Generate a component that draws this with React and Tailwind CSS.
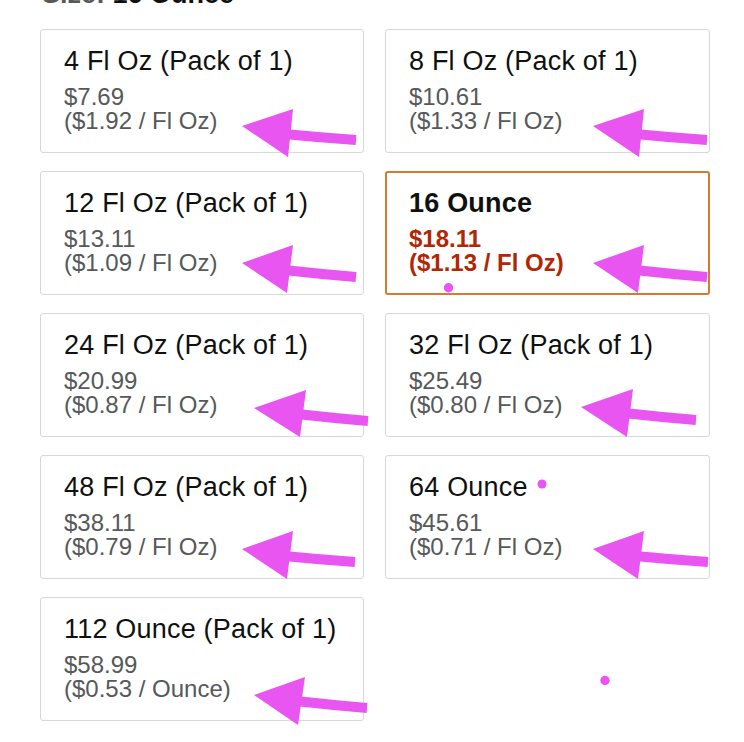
import React from "react";

const items = [
  { t: "4 Fl Oz (Pack of 1)", p: "$7.69", u: "($1.92 / Fl Oz)" },
  { t: "8 Fl Oz (Pack of 1)", p: "$10.61", u: "($1.33 / Fl Oz)" },
  { t: "12 Fl Oz (Pack of 1)", p: "$13.11", u: "($1.09 / Fl Oz)" },
  { t: "16 Ounce", p: "$18.11", u: "($1.13 / Fl Oz)", sel: true },
  { t: "24 Fl Oz (Pack of 1)", p: "$20.99", u: "($0.87 / Fl Oz)" },
  { t: "32 Fl Oz (Pack of 1)", p: "$25.49", u: "($0.80 / Fl Oz)" },
  { t: "48 Fl Oz (Pack of 1)", p: "$38.11", u: "($0.79 / Fl Oz)" },
  { t: "64 Ounce", p: "$45.61", u: "($0.71 / Fl Oz)" },
  { t: "112 Ounce (Pack of 1)", p: "$58.99", u: "($0.53 / Ounce)" },
];

const arrows = [
  { tip: [242, 126], ht: [293, 109], hb: [288, 157], s: [284, 134], e: [356, 140] },
  { tip: [593, 126], ht: [644, 109], hb: [639, 157], s: [635, 134], e: [707, 140] },
  { tip: [242, 263], ht: [293, 245], hb: [287, 293], s: [284, 270], e: [356, 277] },
  { tip: [593, 263], ht: [644, 245], hb: [638, 293], s: [635, 270], e: [707, 277] },
  { tip: [254, 408], ht: [306, 390], hb: [300, 437], s: [297, 414], e: [368, 421] },
  { tip: [581, 407], ht: [633, 389], hb: [627, 437], s: [624, 413], e: [696, 420] },
  { tip: [242, 549], ht: [293, 531], hb: [287, 579], s: [284, 556], e: [355, 562] },
  { tip: [593, 549], ht: [644, 531], hb: [638, 579], s: [635, 556], e: [708, 562] },
  { tip: [254, 695], ht: [305, 677], hb: [298, 725], s: [296, 701], e: [367, 708] },
];

function Card({ t, p, u, sel }) {
  if (sel) {
    return (
      <div className="h-[124px] rounded-[3px] border-2 border-[#d47b30] pl-[22px] pt-[14px]">
        <div className="text-[27px] leading-[32px] font-bold tracking-[0.2px] text-[#0f1111]">{t}</div>
        <div className="mt-[8px] text-[24px] leading-[24px] font-bold text-[#b12704]">{p}</div>
        <div className="text-[24px] leading-[24px] font-bold text-[#b12704]">{u}</div>
      </div>
    );
  }
  return (
    <div className="h-[124px] rounded-[3px] border border-[#d5d9d9] pl-[23px] pt-[15px]">
      <div className="text-[27px] leading-[32px] tracking-[0.2px] text-[#0f1111]">{t}</div>
      <div className="mt-[8px] text-[24px] leading-[24px] text-[#565959]">{p}</div>
      <div className="text-[24px] leading-[24px] text-[#565959]">{u}</div>
    </div>
  );
}

export default function App() {
  return (
    <div className="relative w-[744px] h-[742px] overflow-hidden bg-white font-['Liberation_Sans',Arial,sans-serif]">
      <div className="pl-[40px]">
        <div className="mt-[-22px] h-[32px] pl-[2px] text-[27px] leading-[32px] font-bold">
          <span className="text-[#565959]">Size: </span>
          <span className="text-[#0f1111]">16 Ounce</span>
        </div>
        <div className="mt-[19px] grid grid-cols-[324px_325px] gap-x-[21px] gap-y-[18px]">
          {items.map((it, i) => (
            <Card key={i} {...it} />
          ))}
        </div>
      </div>
      <svg className="pointer-events-none absolute inset-0" width="744" height="742" viewBox="0 0 744 742">
        {arrows.map((a, i) => (
          <g key={i} fill="#e955f0" stroke="#e955f0">
            <path
              d={`M${a.s[0]} ${a.s[1]} Q ${(a.s[0] + a.e[0]) / 2} ${(a.s[1] + a.e[1]) / 2 + 0.5} ${a.e[0]} ${a.e[1]}`}
              fill="none"
              strokeWidth="10"
              strokeLinecap="butt"
            />
            <polygon points={`${a.tip[0]},${a.tip[1]} ${a.ht[0]},${a.ht[1]} ${a.hb[0]},${a.hb[1]}`} strokeWidth="0" />
          </g>
        ))}
        <circle cx="448.5" cy="287.7" r="4.7" fill="#e955f0" />
        <circle cx="542" cy="484" r="4.5" fill="#e955f0" />
        <circle cx="605" cy="680.5" r="4.7" fill="#e955f0" />
      </svg>
    </div>
  );
}
